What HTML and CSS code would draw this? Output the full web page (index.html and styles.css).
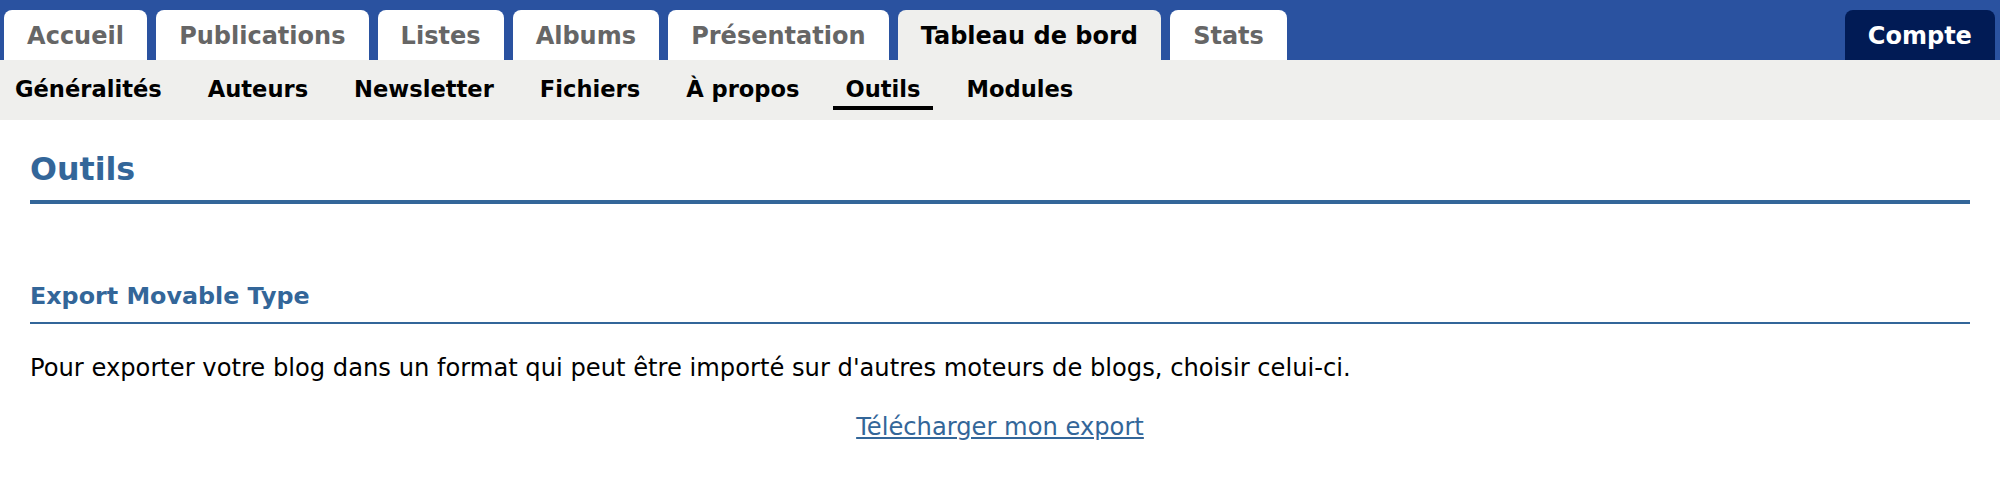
FILE: index.html
```html
<!DOCTYPE html>
<html lang="fr">
<head>
<meta charset="utf-8">
<title>Outils</title>
<link rel="stylesheet" href="styles.css">
</head>
<body>
<header class="topbar">
  <nav class="tabs">
    <a class="tab" href="#">Accueil</a>
    <a class="tab" href="#">Publications</a>
    <a class="tab" href="#">Listes</a>
    <a class="tab" href="#">Albums</a>
    <a class="tab" href="#">Présentation</a>
    <a class="tab tab-active" href="#">Tableau de bord</a>
    <a class="tab" href="#">Stats</a>
  </nav>
  <a class="tab tab-account" href="#">Compte</a>
</header>
<nav class="subnav">
  <a class="subnav-item" href="#">Généralités</a>
  <a class="subnav-item" href="#">Auteurs</a>
  <a class="subnav-item" href="#">Newsletter</a>
  <a class="subnav-item" href="#">Fichiers</a>
  <a class="subnav-item" href="#">À propos</a>
  <a class="subnav-item subnav-active" href="#">Outils</a>
  <a class="subnav-item" href="#">Modules</a>
</nav>
<main class="content">
  <h2 class="page-title">Outils</h2>
  <section class="block">
    <h3 class="block-title">Export Movable Type</h3>
    <p class="block-text">Pour exporter votre blog dans un format qui peut être importé sur d'autres moteurs de blogs, choisir celui-ci.</p>
    <p class="block-action"><a class="link" href="#">Télécharger mon export</a></p>
  </section>
</main>
</body>
</html>
```

FILE: styles.css
```css
* { box-sizing: border-box; }

html, body {
  margin: 0;
  padding: 0;
  background: #ffffff;
  font-family: "DejaVu Sans", Verdana, sans-serif;
  color: #000000;
}

a { text-decoration: none; }

.topbar {
  display: flex;
  justify-content: space-between;
  align-items: flex-end;
  height: 60px;
  padding: 10px 5px 0 4px;
  background: #2a52a0;
}

.tabs {
  display: flex;
  gap: 9px;
}

.tab {
  display: block;
  height: 50px;
  padding: 2px 23.1px 0;
  line-height: 48px;
  font-size: 24px;
  font-weight: bold;
  color: #666666;
  background: #ffffff;
  border-radius: 8px 8px 0 0;
  white-space: nowrap;
}

.tab-active {
  color: #000000;
  background: #efefed;
}

.tab-account {
  color: #ffffff;
  background: #011b55;
}

.subnav {
  display: flex;
  align-items: flex-start;
  gap: 22px;
  height: 60px;
  padding: 13px 0 0 3px;
  background: #efefed;
}

.subnav-item {
  display: block;
  padding: 0 12px;
  line-height: 33px;
  font-size: 22.6px;
  font-weight: bold;
  color: #000000;
  border-bottom: 4px solid transparent;
  white-space: nowrap;
}

.subnav-active {
  border-bottom-color: #000000;
}

.content {
  padding: 0 30px;
}

.page-title {
  margin: 31px 0 0;
  padding-bottom: 13px;
  font-size: 31.7px;
  line-height: 36px;
  font-weight: bold;
  color: #336699;
  border-bottom: 4px solid #336699;
}

.block-title {
  margin: 79px 0 0;
  padding-bottom: 12px;
  font-size: 23.8px;
  line-height: 27px;
  font-weight: bold;
  color: #336699;
  border-bottom: 2px solid #336699;
}

.block-text {
  margin: 30px 0 0;
  font-size: 24.2px;
  line-height: 28px;
}

.block-action {
  margin: 31px 0 0;
  text-align: center;
  font-size: 24.2px;
  line-height: 28px;
}

.link {
  color: #336699;
  text-decoration: underline;
}
```
